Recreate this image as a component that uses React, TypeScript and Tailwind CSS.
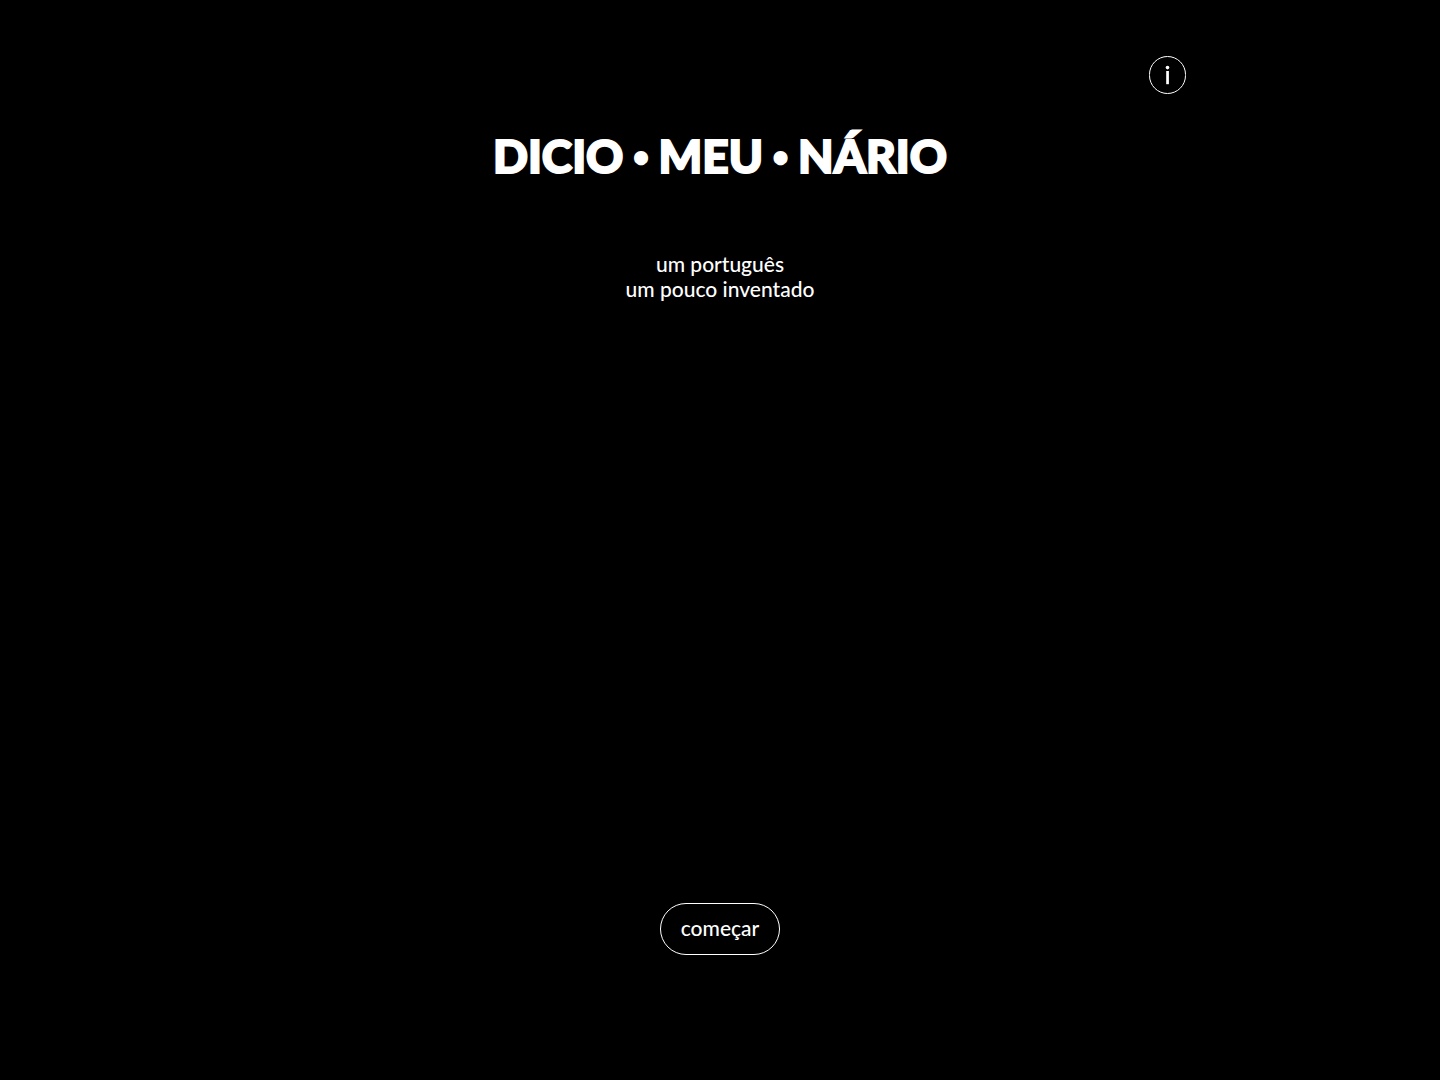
import React from 'react';

const App: React.FC = () => {
  return (
    <div className="min-h-screen bg-black text-white font-['Lato',sans-serif]">
      <div className="mx-auto flex min-h-screen w-full max-w-[932px] flex-col items-center pt-14 pb-[125px]">
        <header className="flex w-full flex-col items-center">
          <button
            type="button"
            aria-label="informações"
            className="flex h-[38px] w-[37px] items-center justify-center self-end rounded-full border border-white"
          >
            <svg width="5" height="20" viewBox="0 0 5 20" fill="currentColor" aria-hidden="true">
              <circle cx="2.5" cy="2.6" r="1.8" />
              <rect x="1.2" y="6" width="2.7" height="13.2" />
            </svg>
          </button>
          <h1 className="mt-8 flex items-center gap-[10px] text-[46px] leading-[60px] font-black [-webkit-text-stroke:2px_white]">
            <span>DICIO</span>
            <span className="text-[26px]">•</span>
            <span>MEU</span>
            <span className="text-[26px]">•</span>
            <span>NÁRIO</span>
          </h1>
        </header>

        <p className="mt-[65px] text-center text-[21px] leading-[25px] font-medium">
          um português
          <br />
          um pouco inventado
        </p>

        <button
          type="button"
          className="mt-auto flex h-[52px] w-[120px] items-center justify-center rounded-full border border-white pb-[2px] text-[21px] font-medium"
        >
          começar
        </button>
      </div>
    </div>
  );
};

export default App;
